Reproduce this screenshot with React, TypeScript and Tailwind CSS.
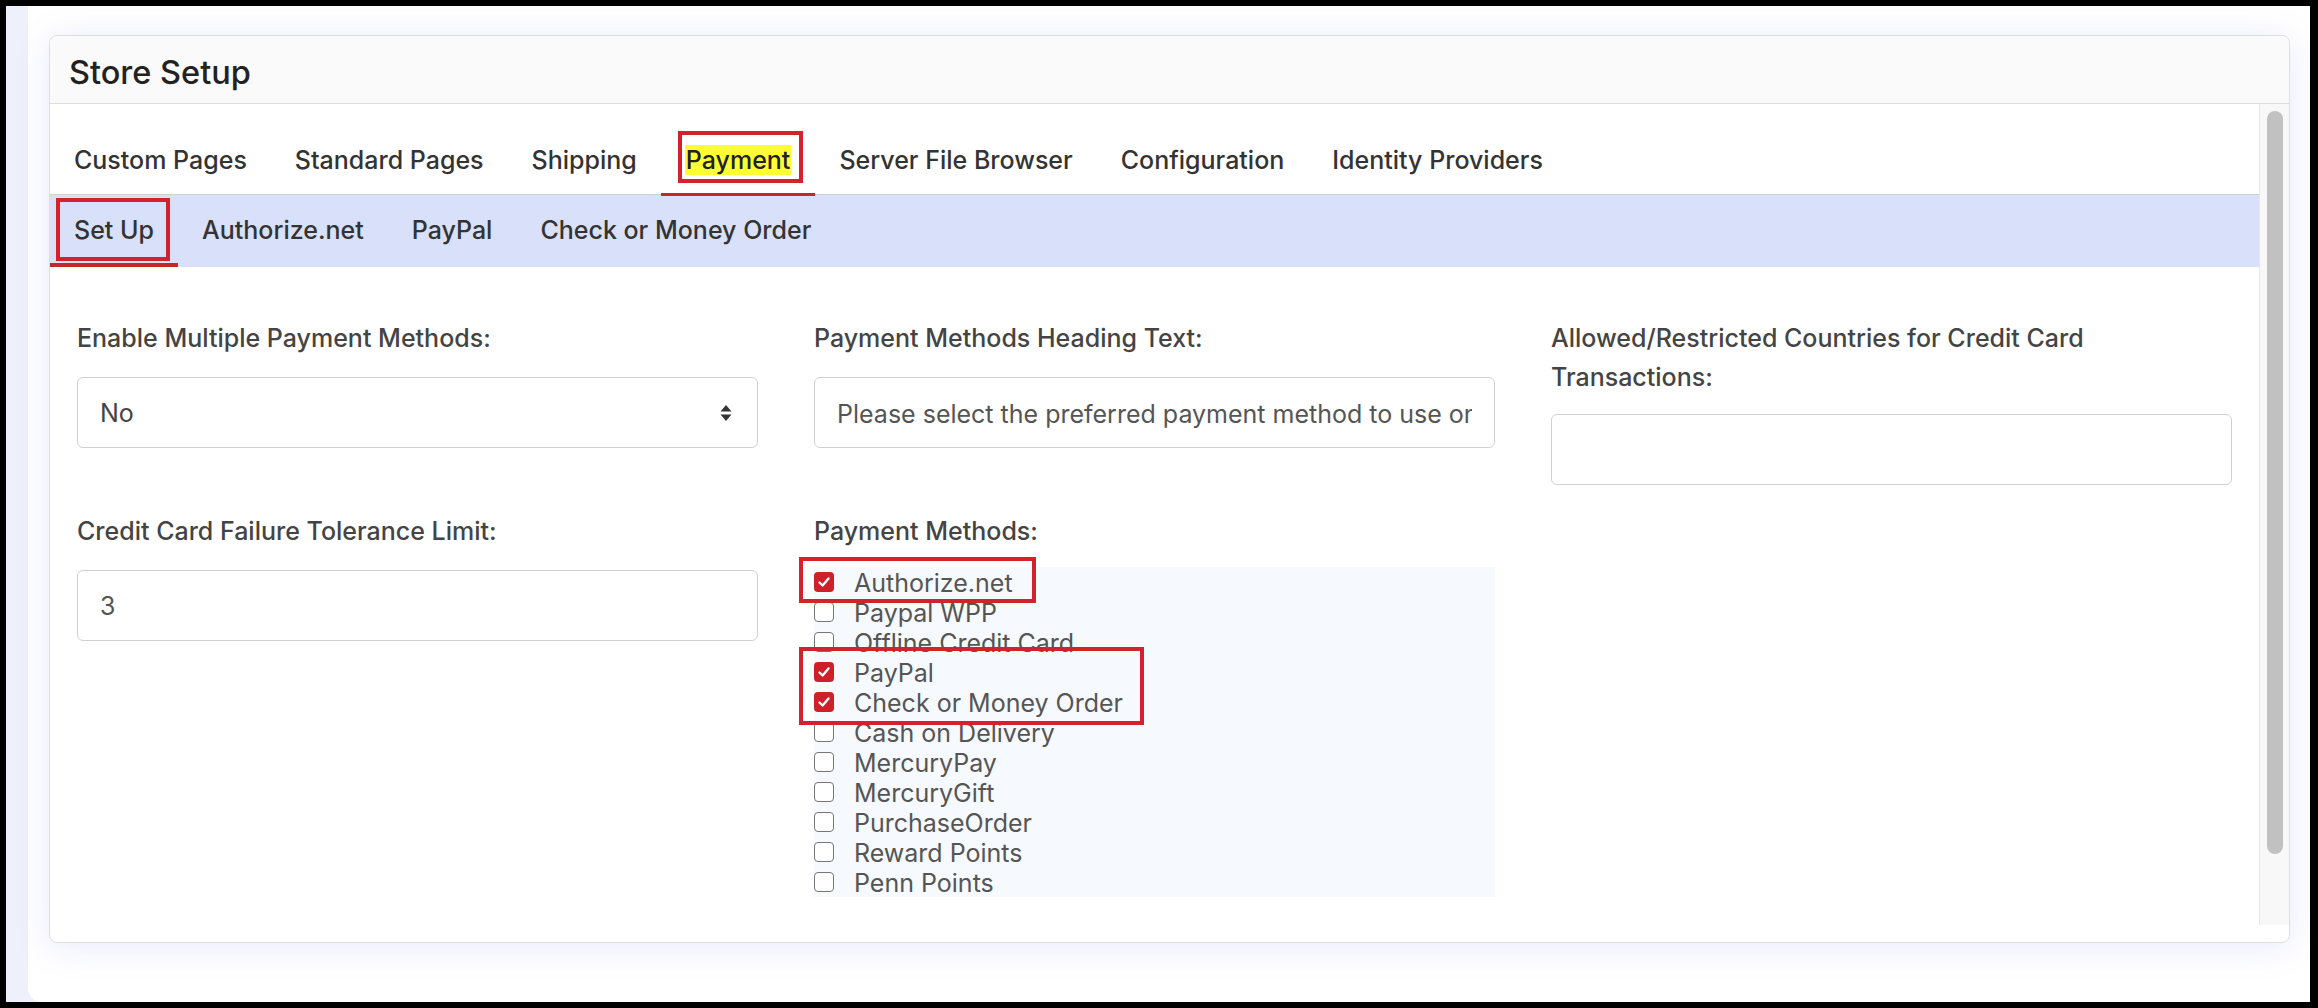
import React from "react";

const font = { fontFamily: "Inter, 'Noto Sans', 'Liberation Sans', sans-serif" };

function Check({ checked }: { checked: boolean }) {
  if (checked) {
    return (
      <span className="flex h-[20px] w-[20px] shrink-0 items-center justify-center rounded-[4px] bg-[#cf1f28]">
        <svg width="14" height="14" viewBox="0 0 14 14" fill="none">
          <path d="M2.5 7.5 L5.6 10.5 L11.5 3.5" stroke="white" strokeWidth="2.4" strokeLinecap="round" strokeLinejoin="round" />
        </svg>
      </span>
    );
  }
  return <span className="h-[20px] w-[20px] shrink-0 rounded-[4px] border-[1.5px] border-[#767676] bg-white" />;
}

const methods: [string, boolean][] = [
  ["Authorize.net", true],
  ["Paypal WPP", false],
  ["Offline Credit Card", false],
  ["PayPal", true],
  ["Check or Money Order", true],
  ["Cash on Delivery", false],
  ["MercuryPay", false],
  ["MercuryGift", false],
  ["PurchaseOrder", false],
  ["Reward Points", false],
  ["Penn Points", false],
];

function Label({ children }: { children: React.ReactNode }) {
  return <div className="mb-[19px] text-[25px] font-medium leading-[39px] text-[#444]">{children}</div>;
}

export default function App() {
  const tabs = ["Custom Pages", "Standard Pages", "Shipping", "Payment", "Server File Browser", "Configuration", "Identity Providers"];
  const subtabs = ["Set Up", "Authorize.net", "PayPal", "Check or Money Order"];
  return (
    <div style={font} className="flex h-[1008px] w-[2318px] bg-black pb-[6px] pl-[6px] pr-[8px] pt-[6px]">
      <div className="flex flex-1 bg-[#eef0fb]">
        <div className="w-[22px] shrink-0" />
        <div className="flex-1 rounded-bl-[14px] bg-white pl-[21px] pr-[20px] pt-[29px]">
          <div className="flex h-[908px] flex-col rounded-[8px] border border-[#dedede] bg-white pb-[17px] shadow-[0_4px_34px_rgba(110,120,235,0.16)]">
            <div className="flex h-[68px] shrink-0 items-center rounded-t-[8px] border-b border-[#dddddd] bg-[#fafafa] pl-[19px] pt-[7px] text-[32.5px] font-medium text-[#222]">
              Store Setup
            </div>
            <div className="flex min-h-0 flex-1">
              <div className="flex-1 overflow-hidden">
                <div className="flex h-[91px] items-end border-b-[1.5px] border-[#cfcfcf]">
                  {tabs.map((t) => (
                    <div
                      key={t}
                      className={
                        "-mb-[1.5px] px-[24px] pb-[16px] text-[25px] font-medium leading-[34px] text-[#333] " +
                        (t === "Payment" ? "border-b-[3px] border-[#c62828]" : "border-b-[3px] border-transparent")
                      }
                    >
                      {t === "Payment" ? (
                        <span className="relative">
                          <span className="bg-[#ffff33] px-[1px] text-[#222]">{t}</span>
                          <span className="absolute -bottom-[8px] -left-[7px] -right-[12px] -top-[14px] border-[4px] border-[#d3222b]" />
                        </span>
                      ) : (
                        t
                      )}
                    </div>
                  ))}
                </div>
                <div className="flex h-[72px] items-center bg-[#d9e0f9]">
                  {subtabs.map((t) => (
                    <div
                      key={t}
                      className={
                        "flex h-full items-center px-[24px] pt-[3px] text-[25px] font-medium text-[#333] " +
                        (t === "Set Up" ? "border-b-[4px] border-[#c62828]" : "border-b-[4px] border-transparent")
                      }
                    >
                      {t === "Set Up" ? (
                        <span className="relative">
                          {t}
                          <span className="absolute -bottom-[12px] -left-[18px] -right-[16px] -top-[14px] border-[4px] border-[#d3222b]" />
                        </span>
                      ) : (
                        t
                      )}
                    </div>
                  ))}
                </div>
                <div className="grid grid-cols-3 gap-x-[56px] px-[27px] pt-[52px]">
                  <div>
                    <Label>Enable Multiple Payment Methods:</Label>
                    <div className="flex h-[71px] items-center justify-between rounded-[6px] border-[1.5px] border-[#d0d0d0] bg-white pl-[22px] pr-[24px] text-[25px] text-[#444]">
                      <span className="pt-[2px]">No</span>
                      <svg width="14" height="20" viewBox="0 0 14 20">
                        <path d="M7 2 L12.5 8.5 L1.5 8.5 Z" fill="#333" />
                        <path d="M7 18 L12.5 11.5 L1.5 11.5 Z" fill="#333" />
                      </svg>
                    </div>
                    <div className="mt-[64px]">
                      <Label>Credit Card Failure Tolerance Limit:</Label>
                      <div className="flex h-[71px] items-center rounded-[6px] border-[1.5px] border-[#d0d0d0] bg-white pl-[22px] pt-[2px] text-[25px] text-[#555]">
                        3
                      </div>
                    </div>
                  </div>
                  <div>
                    <Label>Payment Methods Heading Text:</Label>
                    <input
                      readOnly
                      value="Please select the preferred payment method to use on this order."
                      style={font}
                      className="block h-[71px] w-full rounded-[6px] border-[1.5px] border-[#d0d0d0] bg-white px-[22px] pt-[3px] text-[25px] text-[#555] outline-none"
                    />
                    <div className="mt-[64px]">
                      <Label>Payment Methods:</Label>
                      <div className="relative -mt-[3px] bg-[#f6f9fe]">
                        {methods.map(([m, c]) => (
                          <div key={m} className="flex h-[30px] items-center gap-[20px] text-[25px] leading-[30px] text-[#555]">
                            <Check checked={c} />
                            <span className="pt-[2px]">{m}</span>
                          </div>
                        ))}
                        <span className="absolute -left-[15px] -top-[10px] h-[46px] w-[237px] border-[4px] border-[#d3222b]" />
                        <span className="absolute -left-[15px] top-[80px] h-[78px] w-[345px] border-[4px] border-[#d3222b]" />
                      </div>
                    </div>
                  </div>
                  <div>
                    <div className="mb-[17px] pr-[60px] text-[25px] font-medium leading-[39px] text-[#444]">
                      Allowed/Restricted Countries for Credit Card Transactions:
                    </div>
                    <div className="h-[71px] rounded-[6px] border-[1.5px] border-[#d0d0d0] bg-white" />
                  </div>
                </div>
              </div>
              <div className="w-[30px] shrink-0 border-l border-[#e6e6e6] bg-[#f8f8f8] pl-[7px] pt-[7px]">
                <div className="h-[743px] w-[16px] rounded-full bg-[#c1c1c1]" />
              </div>
            </div>
          </div>
        </div>
      </div>
    </div>
  );
}
